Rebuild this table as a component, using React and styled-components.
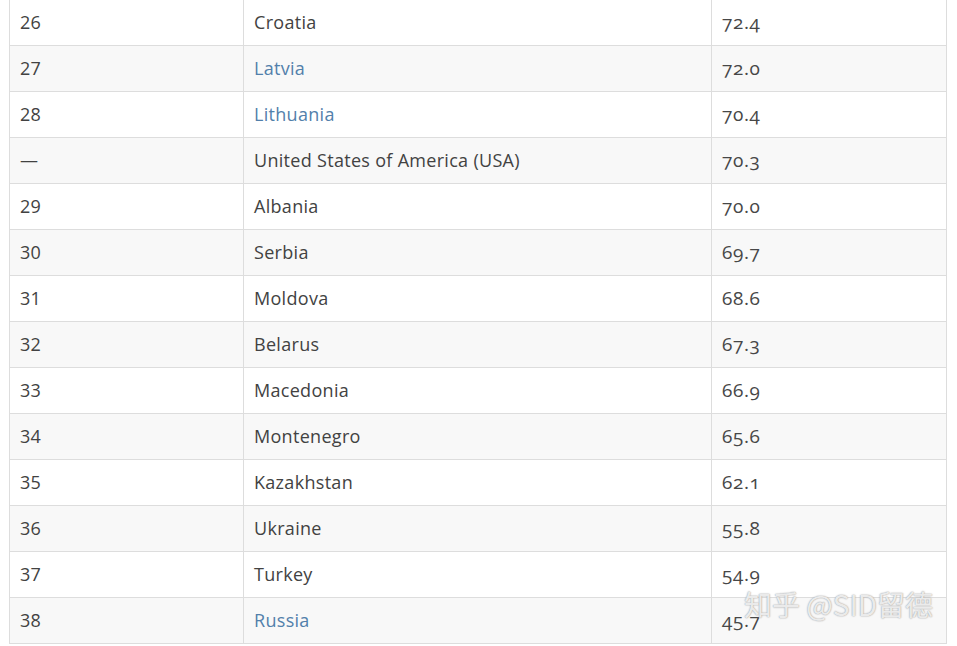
import styled, { createGlobalStyle } from 'styled-components';

const GlobalStyle = createGlobalStyle`
  html, body {
    margin: 0;
    padding: 0;
    background: #ffffff;
  }
`;

const Page = styled.div`
  position: relative;
  width: 957px;
  height: 646px;
  overflow: hidden;
  padding-left: 9px;
  box-sizing: border-box;
  font-family: 'Open Sans', 'Noto Sans', sans-serif;
  color: #424242;
`;

const Table = styled.table`
  width: 937px;
  table-layout: fixed;
  border-collapse: collapse;
  margin-top: -1px;
  font-size: 18px;
  letter-spacing: 0.3px;
`;

const Row = styled.tr`
  height: 46px;
  background: ${(p) => (p.$striped ? '#f8f8f8' : '#ffffff')};
`;

const Cell = styled.td`
  border: 1px solid #dddddd;
  padding: 0 0 1px 10px;
  vertical-align: middle;
  box-sizing: border-box;
`;

const ScoreCell = styled(Cell)`
  font-size: 19px;
  letter-spacing: 0.6px;
  font-variant-numeric: oldstyle-nums;
  color: #474747;
`;

const Link = styled.span`
  color: #5280ab;
`;

const Watermark = styled.div`
  position: absolute;
  right: 24px;
  bottom: 22px;
  font-family: 'Noto Sans CJK SC', 'Noto Sans', sans-serif;
  font-size: 28px;
  color: rgba(255, 255, 255, 0.8);
  text-shadow: 0 0 1px #a0a0a0, 0 0 2px #b5b5b5;
`;

const rows = [
  ['26', 'Croatia', '72.4'],
  ['27', 'Latvia', '72.0', true],
  ['28', 'Lithuania', '70.4', true],
  ['—', 'United States of America (USA)', '70.3'],
  ['29', 'Albania', '70.0'],
  ['30', 'Serbia', '69.7'],
  ['31', 'Moldova', '68.6'],
  ['32', 'Belarus', '67.3'],
  ['33', 'Macedonia', '66.9'],
  ['34', 'Montenegro', '65.6'],
  ['35', 'Kazakhstan', '62.1'],
  ['36', 'Ukraine', '55.8'],
  ['37', 'Turkey', '54.9'],
  ['38', 'Russia', '45.7', true],
];

export default function App() {
  return (
    <Page>
      <GlobalStyle />
      <Table>
        <colgroup>
          <col style={{ width: 234 }} />
          <col style={{ width: 468 }} />
          <col style={{ width: 235 }} />
        </colgroup>
        <tbody>
          {rows.map(([rank, country, score, link], i) => (
            <Row key={country} $striped={i % 2 === 1}>
              <Cell>{rank}</Cell>
              <Cell>{link ? <Link>{country}</Link> : country}</Cell>
              <ScoreCell>{score}</ScoreCell>
            </Row>
          ))}
        </tbody>
      </Table>
      <Watermark>知乎 @SID留德</Watermark>
    </Page>
  );
}
